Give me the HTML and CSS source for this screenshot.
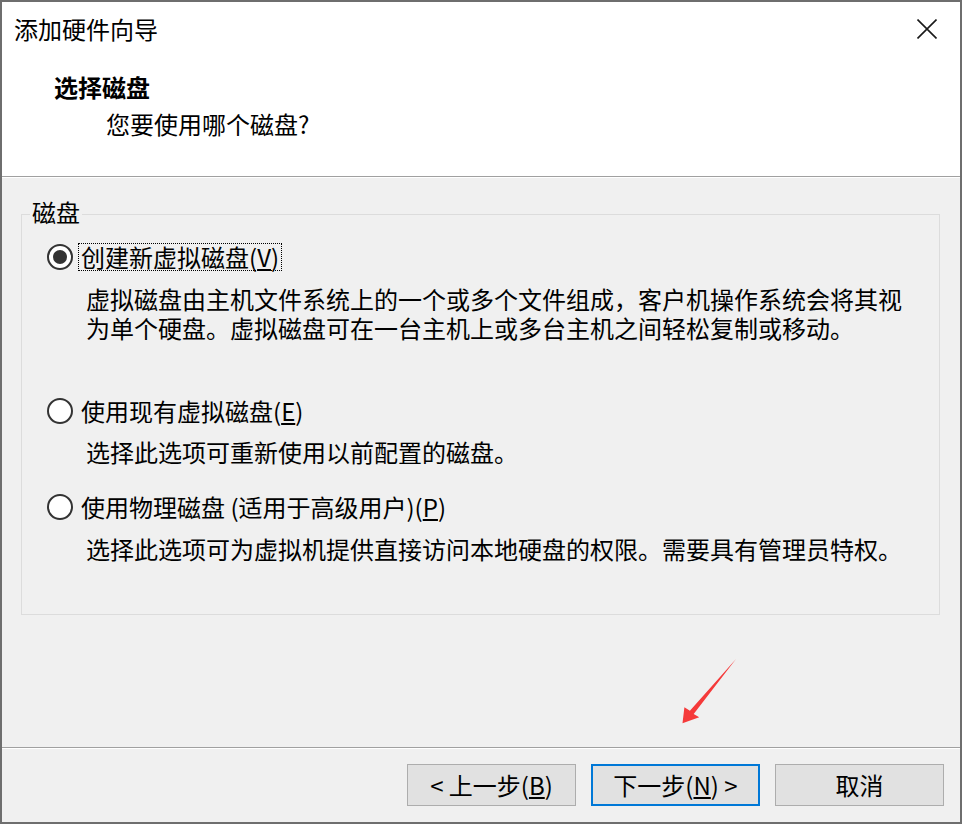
FILE: index.html
```html
<!DOCTYPE html>
<html lang="zh-CN">
<head>
<meta charset="utf-8">
<title>添加硬件向导</title>
<link rel="stylesheet" href="styles.css">
</head>
<body>
<div class="dialog">
  <header class="header">
    <div class="titlebar">
      <span class="title">添加硬件向导</span>
      <svg class="close" width="20" height="20" viewBox="0 0 20 20"><path d="M0.5 0.5 L19.5 19.5 M19.5 0.5 L0.5 19.5" stroke="#1a1a1a" stroke-width="1.6" fill="none"/></svg>
    </div>
    <div class="heading">选择磁盘</div>
    <div class="subheading">您要使用哪个磁盘?</div>
  </header>
  <main class="body">
    <section class="group">
      <div class="group-label">磁盘</div>
      <div class="row row-first">
        <span class="radio checked"><span class="dot"></span></span>
        <span class="label focused">创建新虚拟磁盘(<u>V</u>)</span>
      </div>
      <p class="desc desc-tall">虚拟磁盘由主机文件系统上的一个或多个文件组成，客户机操作系统会将其视<br>为单个硬盘。虚拟磁盘可在一台主机上或多台主机之间轻松复制或移动。</p>
      <div class="row row-second">
        <span class="radio"></span>
        <span class="label">使用现有虚拟磁盘(<u>E</u>)</span>
      </div>
      <p class="desc">选择此选项可重新使用以前配置的磁盘。</p>
      <div class="row row-third">
        <span class="radio"></span>
        <span class="label">使用物理磁盘 (适用于高级用户)(<u>P</u>)</span>
      </div>
      <p class="desc">选择此选项可为虚拟机提供直接访问本地硬盘的权限。需要具有管理员特权。</p>
    </section>
  </main>
  <footer class="footer">
    <button class="btn">&lt; 上一步(<u>B</u>)</button>
    <button class="btn btn-default">下一步(<u>N</u>) &gt;</button>
    <button class="btn">取消</button>
  </footer>
  <svg class="arrow" width="60" height="72" viewBox="680 655 60 72"><polygon points="736,659 693.7,713.9 699.2,717.3 682.5,723.3 684.4,707.3 689.9,710.7" fill="#f53a3a"/></svg>
</div>
</body>
</html>
```

FILE: styles.css
```css
* { box-sizing: border-box; }
html, body { margin: 0; padding: 0; }
body {
  width: 962px;
  height: 824px;
  overflow: hidden;
  font-family: "Noto Sans CJK SC", "Noto Sans", sans-serif;
  font-size: 24px;
  color: #000;
  background: #6e6e6e;
}
.dialog {
  position: relative;
  width: 962px;
  height: 824px;
  border: 2px solid #6e6e6e;
  display: flex;
  flex-direction: column;
  background: #f0f0f0;
}
.header {
  background: #fff;
  border-bottom: 1px solid #a0a0a0;
  padding: 12px 0 37px 12px;
  height: 175px;
}
.titlebar {
  display: flex;
  align-items: center;
  justify-content: space-between;
  padding-right: 23px;
  line-height: 30px;
  height: 30px;
}
.title { font-size: 24px; }
.close { display: block; }
.heading {
  margin-top: 28px;
  margin-left: 40px;
  font-weight: bold;
  line-height: 30px;
}
.subheading {
  margin-top: 7px;
  margin-left: 92px;
  line-height: 30px;
}
.body {
  flex: 1;
  box-shadow: inset 0 1px 0 #fff;
  padding-top: 37px;
}
.group {
  margin: 0 20px 0 19px;
  border: 1px solid #dcdcdc;
  padding: 0 0 51px 0;
}
.group-label {
  margin: -18px 0 0 8px;
  padding: 0 2px;
  width: fit-content;
  background: #f0f0f0;
  line-height: 30px;
  height: 30px;
}
.row {
  display: flex;
  align-items: center;
  gap: 5px;
  margin-left: 25px;
  height: 28px;
}
.row-first { margin-top: 16px; }
.row-second { margin-top: 55px; }
.row-third { margin-top: 27px; }
.radio {
  width: 26px;
  height: 26px;
  border: 2px solid #333;
  border-radius: 50%;
  background: #fff;
  display: flex;
  align-items: center;
  justify-content: center;
  flex: none;
}
.dot {
  width: 14px;
  height: 14px;
  border-radius: 50%;
  background: #333;
}
.label {
  border: 1px solid transparent;
  padding: 0 2px 0 2px;
  line-height: 26px;
  height: 28px;
  white-space: nowrap;
}
.label.focused { border: 1px dotted #000; }
.desc {
  margin: 13px 0 0 64px;
  line-height: 29px;
}
.row-third + .desc { margin-top: 13px; }
.row-second + .desc { margin-top: 12px; }
.footer {
  border-top: 1px solid #a0a0a0;
  box-shadow: inset 0 1px 0 #fff;
  height: 75px;
  padding: 16px 16px 16px 0;
  display: flex;
  justify-content: flex-end;
  gap: 15px;
}
.btn {
  width: 169px;
  height: 42px;
  border: 1px solid #adadad;
  background: #e1e1e1;
  font-family: "Noto Sans CJK SC", "Noto Sans", sans-serif;
  font-size: 24px;
  color: #000;
  line-height: 30px;
  padding: 0;
}
.btn-default { border: 2px solid #0078d7; }
.arrow {
  position: absolute;
  left: 678px;
  top: 653px;
}
```
